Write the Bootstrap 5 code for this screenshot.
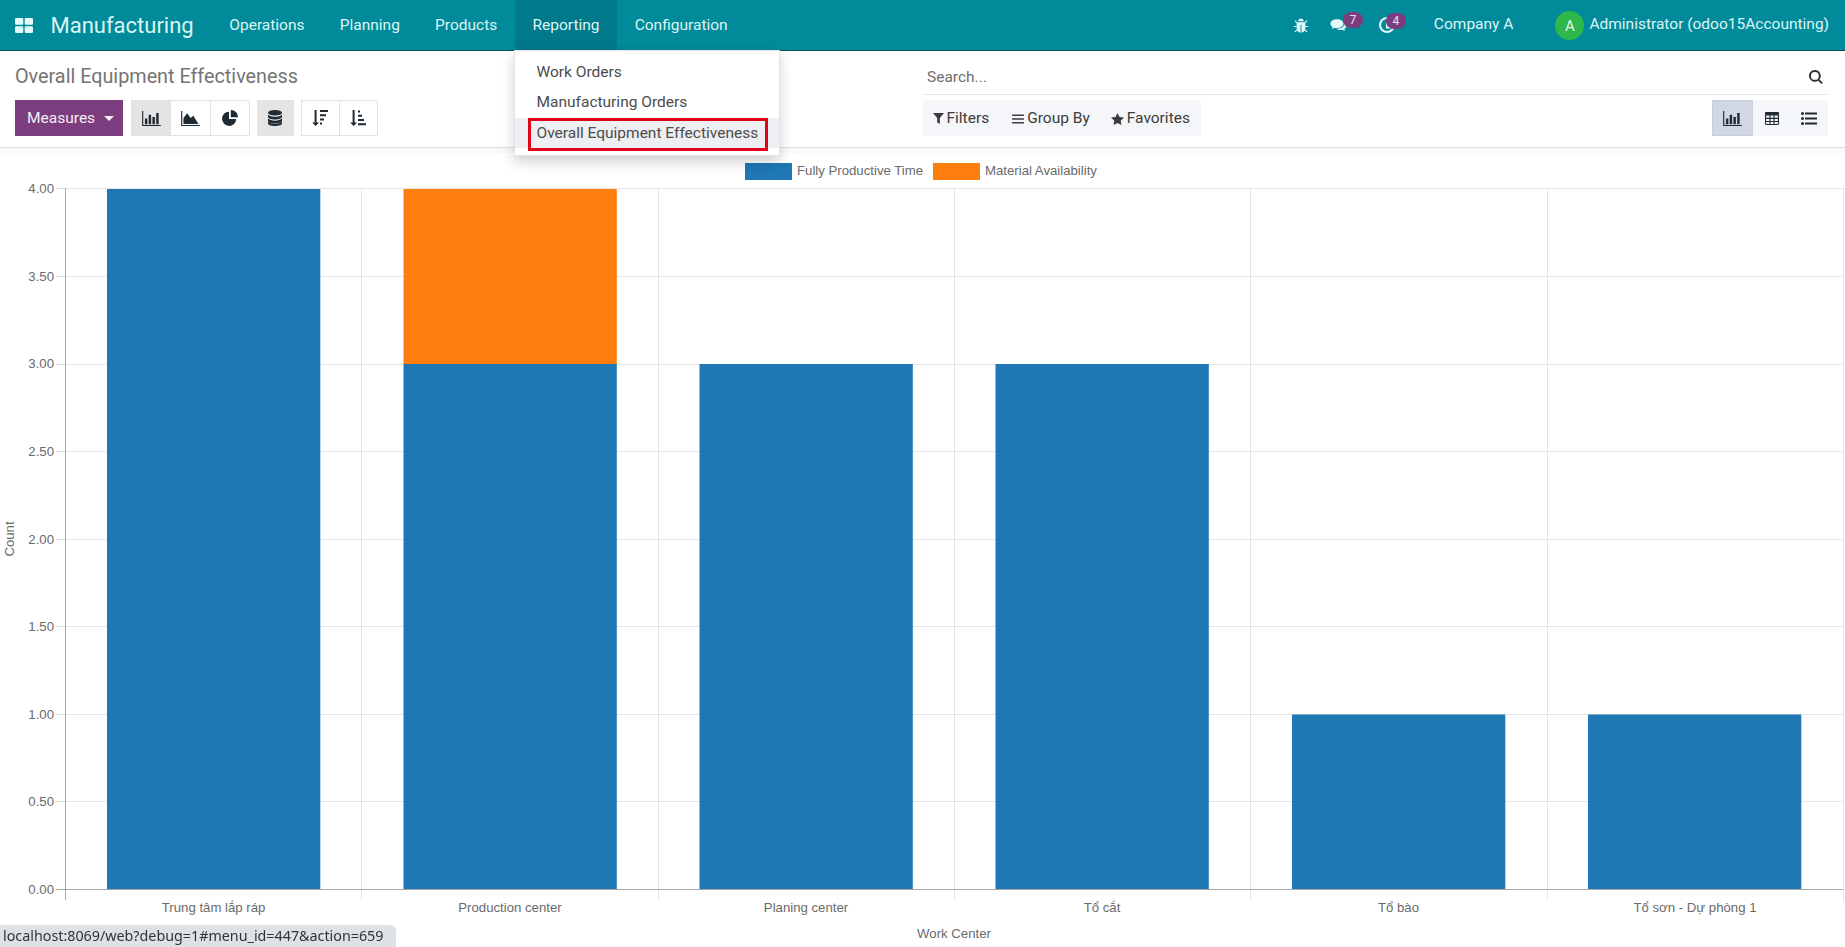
<!DOCTYPE html>
<html lang="en">
<head>
<meta charset="utf-8">
<title>Overall Equipment Effectiveness</title>
<link href="https://cdn.jsdelivr.net/npm/bootstrap@5.3.0/dist/css/bootstrap.min.css" rel="stylesheet">
<style>
html,body{height:947px;overflow:hidden;}
body{font-family:Roboto,sans-serif;font-size:15.5px;color:#4c4c4c;background:#fff;}
.ico{display:block;fill:currentColor;}
.top-bar{height:51px;background:#008a9a;border-bottom:1px solid #0a4b55;color:#dcf5f5;padding-left:15px;}
.apps-ico{width:18px;height:15px;color:#e4f9f9;margin-right:17.5px;}
.brand-name{font-size:22px;margin-right:18px;color:#dcf5f5;}
.top-item{padding:0 17.6px;color:#dcf5f5;height:50px;line-height:50px;position:relative;}
.top-item.is-open{background:#00798a;}
.right-zone{padding-right:16px;}
.bug-ico{width:14px;height:15px;color:#e4f9f9;margin-right:22px;}
.chat-wrap{position:relative;width:18px;height:15px;margin-right:31px;}
.clock-wrap{position:relative;width:16px;height:16px;margin-right:39px;}
.chat-wrap .ico,.clock-wrap .ico{color:#e4f9f9;width:100%;height:100%;}
.count-pill{position:absolute;background:#7c3d7f;color:#e9e0ec;font-size:12px;line-height:16px;height:16px;width:20px;border-radius:8px;text-align:center;top:-6px;left:13px;}
.clock-wrap .count-pill{left:7px;top:-4px;}
.company-name{margin-right:42px;}
.avatar-dot{width:29px;height:29px;border-radius:50%;background:#2fb84a;color:#e6f7ea;text-align:center;line-height:30px;margin-right:5px;font-size:15px;}
.menu-pop{top:50px;left:514px;width:266px;padding:5.500px 0 0;height:106px;border:1px solid #e3e3e3;border-radius:0;margin:0;box-shadow:0 6px 12px rgba(0,0,0,.18);z-index:5;display:block;font-size:15.500px;}
.menu-line{padding:0 21.500px;height:30.500px;line-height:30.500px;color:#4c4c4c;white-space:nowrap;}
.menu-line.is-hover{background:#edeff2;position:relative;}
.red-frame{position:absolute;left:13px;top:0;width:240px;height:33.500px;border:3px solid #e2001a;}
.panel-zone{height:97px;border-bottom:1px solid #dfdfdf;padding:0 17px 0 15px;}
.panel-left{flex:0 0 907.500px;}
.page-title{font-size:19.800px;line-height:24px;color:#747474;margin:14px 0 10px;font-weight:400;height:25px;}
.tools-row{height:36px;}
.measure-btn{background:#7c3d7f;color:#f5eef5;height:36px;width:108px;border:0;border-radius:0;font-size:15.500px;padding:2px 0 0 3px;margin-right:8px;}
.measure-btn:hover{background:#7c3d7f;color:#f5eef5;}
.caret-tri{display:inline-block;border-top:5px solid currentColor;border-left:5px solid transparent;border-right:5px solid transparent;vertical-align:2px;margin-left:5px;}
.tool-btn{width:40.300px;height:36px;border:1px solid #e2e2e2;background:#fff;padding:0;display:flex;align-items:center;justify-content:center;color:#1f2a33;margin-left:-1px;}
.tool-btn.is-on{background:#e4e4e4;}
.tool-first{margin-left:0;}
.db-btn{width:37px;margin:0 7px 0 7px;border-color:#e4e4e4;}
.sort-btn{width:39px;}
.search-row{height:44px;padding-top:11px;border-bottom:1px solid #e6e6e6;color:#6e6e6e;}
.search-row .search-word{padding-left:4.500px;}
.search-ico{width:14px;height:14px;color:#333;margin:0 5px 3px 0;}
.filter-bar{background:#f5f6f9;height:36px;margin-top:5px;padding:1px 0 0 10px;width:278.500px;color:#3c3c3c;}
.filter-item{margin-right:23px;}
.filter-item + .filter-item{margin-right:21px;}
.filter-item .ico,.star-item .ico{margin-right:3px;}
.view-bar{background:#f5f6f9;height:36px;margin-top:5px;width:116px;}
.view-btn{width:37px;height:36px;display:flex;align-items:center;justify-content:center;color:#1f2a33;}
.view-btn.is-on{background:#d2d7e5;border:1px solid #c9cedd;width:41px;color:#1f2a33;}
.soft-strip{height:5px;background:#f8f9fa;}
.chart-svg{display:block;}
.chart-svg text{font-family:"Liberation Sans",sans-serif;font-size:13.200px;fill:#6a6a6a;}
.status-tip{position:fixed;left:0;bottom:0;height:22px;width:396px;background:#dee1e6;border-top-right-radius:6px;font-family:"Noto Sans",sans-serif;font-size:14.300px;line-height:22px;color:#333;padding-left:3px;white-space:nowrap;overflow:hidden;z-index:9;}
</style>
</head>
<body>
<svg width="0" height="0" class="position-absolute">
<defs>
<symbol id="i-bars" viewBox="0 0 20 16"><path d="M0 0h1.200v14.800H20V16H0z"/><path d="M3 8h2.600v6H3zM7 4h2.600v10H7zM11 6.500h2.600V14H11zM15 2h2.600v12H15z"/></symbol>
<symbol id="i-area" viewBox="0 0 20 16"><path d="M0 0h1.200v14.800H20V16H0z"/><path d="M2.500 13.800V7.500L6.500 2.500l3.500 5 3-2.500 5.500 8.800z"/></symbol>
<symbol id="i-pie" viewBox="0 0 16 16"><path d="M7 1.700A7.100 7.100 0 1 0 14.200 9H7z"/><path d="M8.800 0A7.100 7.100 0 0 1 16 7.200H8.800z"/></symbol>
<symbol id="i-db" viewBox="0 0 14 16"><ellipse cx="7" cy="2.800" rx="7" ry="2.800"/><path d="M0 4.400C1 6 4 6.800 7 6.800S13 6 14 4.400v2.400C14 8.400 11 9.500 7 9.500S0 8.400 0 6.800zM0 8.300C1 9.900 4 10.700 7 10.700S13 9.900 14 8.300v2.400C14 12.300 11 13.400 7 13.400S0 12.300 0 10.700zM0 11.500C1 13.100 4 13.900 7 13.900S13 13.100 14 11.500v1.700C14 14.900 11 16 7 16S0 14.900 0 13.200z"/></symbol>
<symbol id="i-sortd" viewBox="0 0 16 16"><path d="M2.600 0h2v12.500H7L3.600 16 .2 12.500h2.400z"/><path d="M8 0h8v2H8zM8 4.200h6v2H8zM8 8.400h4v2H8zM8 12.600h2v2H8z"/></symbol>
<symbol id="i-sorta" viewBox="0 0 16 16"><path d="M2.600 0h2v12.500H7L3.600 16 .2 12.500h2.400z"/><path d="M8 .6h2v2H8zM8 4.800h4v2H8zM8 9h6v2H8zM8 13.200h8v2H8z"/></symbol>
<symbol id="i-table" viewBox="0 0 14 13"><path fill-rule="evenodd" d="M1.200 0h11.600C13.500 0 14 .5 14 1.200v10.600c0 .7-.5 1.200-1.200 1.200H1.200C.5 13 0 12.500 0 11.800V1.200C0 .5.500 0 1.200 0zM1.100 3.600v2.200h3.300V3.600zm4.400 0v2.200h3V3.600zm4.100 0v2.200h3.300V3.600zM1.100 6.900v2h3.300v-2zm4.400 0v2h3v-2zm4.100 0v2h3.300v-2zM1.100 10v1.900h3.300V10zm4.400 0v1.900h3V10zm4.100 0v1.900h3.300V10z"/></symbol>
<symbol id="i-list" viewBox="0 0 16 13"><circle cx="1.500" cy="1.600" r="1.500"/><circle cx="1.500" cy="6.500" r="1.500"/><circle cx="1.500" cy="11.400" r="1.500"/><path d="M4 .4h12v2.200H4zM4 5.400h12v2.200H4zM4 10.400h12v2.200H4z"/></symbol>
<symbol id="i-funnel" viewBox="0 0 12 12"><path d="M0 0h12L7.500 5.500V12l-3-2V5.500z"/></symbol>
<symbol id="i-lines" viewBox="0 0 13 11"><path d="M0 .5h13v1.800H0zM0 4.600h13v1.800H0zM0 8.700h13v1.800H0z"/></symbol>
<symbol id="i-star" viewBox="0 0 13 12"><path d="M6.500 0l2 4 4.500.6-3.300 3.100.8 4.300-4-2.100-4 2.100.8-4.300L0 4.600 4.500 4z"/></symbol>
</defs>
</svg>

<nav class="top-bar d-flex align-items-center">
  <svg class="ico apps-ico" viewBox="0 0 18 15"><rect width="8.300" height="6.800" rx="1.200"/><rect x="9.700" width="8.300" height="6.800" rx="1.200"/><rect y="8.200" width="8.300" height="6.800" rx="1.200"/><rect x="9.700" y="8.200" width="8.300" height="6.800" rx="1.200"/></svg>
  <span class="brand-name">Manufacturing</span>
  <span class="top-item">Operations</span>
  <span class="top-item">Planning</span>
  <span class="top-item">Products</span>
  <span class="top-item is-open">Reporting</span>
  <span class="top-item">Configuration</span>
  <div class="right-zone ms-auto d-flex align-items-center">
    <svg class="ico bug-ico" viewBox="0 0 15 16"><path d="M4.500 3.500C4.800 1.500 6 .5 7.500.5s2.700 1 3 3z"/><path d="M3.800 4.500h7.400c.6 0 1 .4 1 1v5.300c0 2.800-2 5-4.200 5V7.200h-1v8.600c-2.200 0-4.200-2.200-4.200-5V5.500c0-.6.400-1 1-1z"/><path d="M.6 3.200l1-.8 1.800 2-.8.9zM14.400 3.200l-1-.8-1.800 2 .8.900zM0 8.500h2.800v1.200H0zM12.200 8.500H15v1.200h-2.800zM.5 14.300l2.400-2 .7 1-2.200 2zM14.500 14.300l-2.400-2-.7 1 2.200 2z"/></svg>
    <div class="chat-wrap"><svg class="ico" viewBox="0 0 22 17"><path d="M8.500 1C4 1 .5 3.400.5 6.300c0 1.600 1 3 2.700 4-.2.800-.7 1.600-1.300 2.200 1.300-.2 2.500-.7 3.400-1.400 1 .3 2 .4 3.200.4 4.500 0 8-2.300 8-5.200S13 1 8.500 1z"/><path d="M17.500 6.500c.1 3.600-3.800 6-8.500 6-.4 0-.8 0-1.200-.1 1.200 1 3 1.600 5.200 1.600.9 0 1.700-.1 2.400-.3.800.6 1.900 1.100 3.100 1.200-.6-.6-1-1.300-1.200-2 1.600-.8 2.700-2.100 2.700-3.500 0-1.100-.9-2.200-2.500-2.900z"/></svg><span class="count-pill">7</span></div>
    <div class="clock-wrap"><svg class="ico" viewBox="0 0 17 17"><path fill-rule="evenodd" d="M8.500 0a8.500 8.500 0 1 0 0 17 8.500 8.500 0 0 0 0-17zm0 2.200a6.300 6.300 0 1 1 0 12.600 6.300 6.300 0 0 1 0-12.600z"/><path d="M7.500 6.500h1.800v4H12v1.600H7.500z"/></svg><span class="count-pill">4</span></div>
    <span class="company-name">Company A</span>
    <span class="avatar-dot">A</span>
    <span>Administrator (odoo15Accounting)</span>
  </div>
</nav>

<div class="dropdown-menu menu-pop position-absolute">
  <div class="menu-line">Work Orders</div>
  <div class="menu-line">Manufacturing Orders</div>
  <div class="menu-line is-hover">Overall Equipment Effectiveness<span class="red-frame"></span></div>
</div>

<section class="panel-zone d-flex">
  <div class="panel-left">
    <h1 class="page-title">Overall Equipment Effectiveness</h1>
    <div class="tools-row d-flex align-items-center">
      <button class="btn measure-btn">Measures <span class="caret-tri"></span></button>
      <div class="d-flex">
        <div class="tool-btn tool-first is-on"><svg class="ico" width="19" height="15"><use href="#i-bars"/></svg></div>
        <div class="tool-btn"><svg class="ico" width="19" height="15"><use href="#i-area"/></svg></div>
        <div class="tool-btn"><svg class="ico" width="16" height="16"><use href="#i-pie"/></svg></div>
      </div>
      <div class="tool-btn db-btn is-on"><svg class="ico" width="14" height="16"><use href="#i-db"/></svg></div>
      <div class="d-flex">
        <div class="tool-btn tool-first sort-btn"><svg class="ico" width="16" height="16"><use href="#i-sortd"/></svg></div>
        <div class="tool-btn sort-btn"><svg class="ico" width="16" height="16"><use href="#i-sorta"/></svg></div>
      </div>
    </div>
  </div>
  <div class="flex-grow-1">
    <div class="search-row d-flex justify-content-between align-items-center">
      <span class="search-word">Search...</span>
      <svg class="ico search-ico" viewBox="0 0 15 15"><path fill-rule="evenodd" d="M6.300 0a6.300 6.300 0 0 1 5 10.100l3.500 3.500-1.600 1.400-3.400-3.500A6.300 6.300 0 1 1 6.300 0zm0 2.100a4.200 4.200 0 1 0 0 8.400 4.200 4.200 0 0 0 0-8.400z"/></svg>
    </div>
    <div class="d-flex justify-content-between">
      <div class="filter-bar d-flex align-items-center">
        <span class="filter-item d-flex align-items-center"><svg class="ico" width="11" height="11"><use href="#i-funnel"/></svg>Filters</span>
        <span class="filter-item d-flex align-items-center"><svg class="ico" width="12" height="10"><use href="#i-lines"/></svg>Group By</span>
        <span class="star-item d-flex align-items-center"><svg class="ico" width="13" height="12"><use href="#i-star"/></svg>Favorites</span>
      </div>
      <div class="view-bar d-flex">
        <div class="view-btn is-on"><svg class="ico" width="19" height="15"><use href="#i-bars"/></svg></div>
        <div class="view-btn"><svg class="ico" width="14" height="13"><use href="#i-table"/></svg></div>
        <div class="view-btn"><svg class="ico" width="16" height="13"><use href="#i-list"/></svg></div>
      </div>
    </div>
  </div>
</section>
<div class="soft-strip"></div>

<svg class="chart-svg" width="1845" height="794" viewBox="0 153 1845 794">
  <g stroke="#e5e5e5" stroke-width="1">
    <path d="M65.500 188.500H1843M65.500 276.500H1843M65.500 364.500H1843M65.500 451.500H1843M65.500 539.500H1843M65.500 626.500H1843M65.500 714.500H1843M65.500 801.500H1843"/>
    <path d="M361.500 188V900M658.500 188V900M954.500 188V900M1250.500 188V900M1547.500 188V900M1843.500 188V900"/>
    <path d="M56 188.500H65M56 276.500H65M56 364.500H65M56 451.500H65M56 539.500H65M56 626.500H65M56 714.500H65M56 801.500H65" stroke="#ddd"/>
  </g>
  <path d="M65.500 188V900M56 889.500H1843" stroke="#a8a8a8" stroke-width="1" fill="none"/>
  <g fill="#1f77b4">
    <rect x="107" y="189" width="213.300" height="700"/>
    <rect x="403.500" y="364" width="213.300" height="525"/>
    <rect x="699.500" y="364" width="213.300" height="525"/>
    <rect x="995.500" y="364" width="213.300" height="525"/>
    <rect x="1292" y="714.500" width="213.300" height="174.500"/>
    <rect x="1588" y="714.500" width="213.300" height="174.500"/>
  </g>
  <rect x="403.500" y="189" width="213.300" height="175" fill="#ff7f0e"/>
  <rect x="745" y="163" width="47" height="17" fill="#1f77b4"/>
  <text x="797" y="175">Fully Productive Time</text>
  <rect x="933" y="163" width="47" height="17" fill="#ff7f0e"/>
  <text x="985" y="175">Material Availability</text>
  <g text-anchor="end">
    <text x="54" y="193">4.00</text><text x="54" y="281">3.50</text><text x="54" y="368">3.00</text><text x="54" y="456">2.50</text><text x="54" y="543.500">2.00</text><text x="54" y="631">1.50</text><text x="54" y="719">1.00</text><text x="54" y="806">0.50</text><text x="54" y="894">0.00</text>
  </g>
  <g text-anchor="middle">
    <text x="213.600" y="912">Trung tâm lắp ráp</text>
    <text x="510" y="912">Production center</text>
    <text x="806" y="912">Planing center</text>
    <text x="1102" y="912">Tổ cắt</text>
    <text x="1398.500" y="912">Tổ bào</text>
    <text x="1695" y="912">Tổ sơn - Dự phòng 1</text>
    <text x="954" y="938">Work Center</text>
    <text transform="translate(14 539) rotate(-90)">Count</text>
  </g>
</svg>

<div class="status-tip">localhost:8069/web?debug=1#menu_id=447&amp;action=659</div>
<script src="https://cdn.jsdelivr.net/npm/bootstrap@5.3.0/dist/js/bootstrap.bundle.min.js"></script>
</body>
</html>
